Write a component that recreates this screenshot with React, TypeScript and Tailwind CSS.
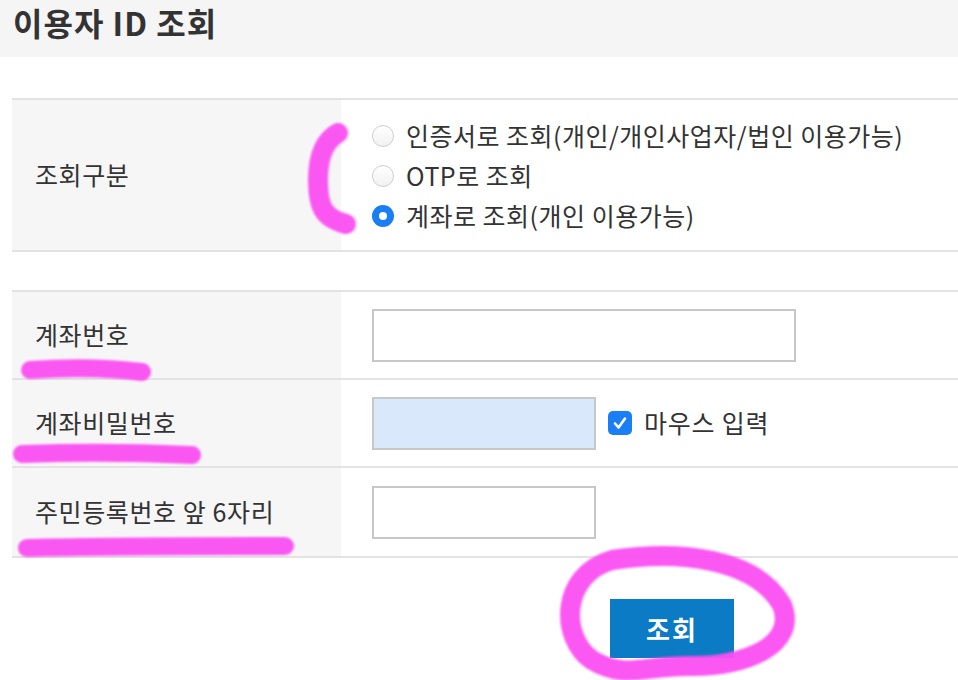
import React from "react";

const font = { fontFamily: '"Noto Sans CJK KR", "Noto Sans", sans-serif' };

function Radio({ checked }: { checked?: boolean }) {
  return checked ? (
    <span className="flex h-[22px] w-[22px] shrink-0 items-center justify-center rounded-full bg-[#1a7ef5]">
      <span className="h-[8px] w-[8px] rounded-full bg-white" />
    </span>
  ) : (
    <span className="h-[22px] w-[22px] shrink-0 rounded-full border border-[#cfcfcf] bg-gradient-to-b from-white to-[#f1f1f1]" />
  );
}

function Row({ label, children, last }: { label: string; children: React.ReactNode; last?: boolean }) {
  return (
    <div className={"flex h-[88px] " + (last ? "" : "border-b-2 border-[#e3e3e3]")}>
      <div className="flex w-[329px] items-center bg-[#f6f6f6] pl-[23px] text-[25px] tracking-[0.6px] text-[#333]">{label}</div>
      <div className="flex flex-1 items-center pl-[31px]">{children}</div>
    </div>
  );
}

export default function App() {
  return (
    <div className="relative h-[680px] w-[958px] overflow-hidden bg-white" style={font}>
      <div className="flex h-[57px] items-start bg-[#f5f5f5] pl-[13px] pt-[1px]">
        <h1 className="text-[32px] font-bold leading-[42px] tracking-[1px] text-[#333]">이용자 ID 조회</h1>
      </div>

      <div className="ml-[12px] mt-[41px] border-y-2 border-[#e3e3e3]">
        <div className="flex h-[150px]">
          <div className="flex w-[329px] items-center bg-[#f6f6f6] pl-[23px] text-[25px] tracking-[0.6px] text-[#333]">조회구분</div>
          <div className="flex flex-1 flex-col pl-[31px] pt-[16px] text-[25px] tracking-[0.5px] text-[#333]">
            <label className="flex h-[40px] items-center gap-[12px]">
              <Radio />
              <span>인증서로 조회(개인/개인사업자/법인 이용가능)</span>
            </label>
            <label className="flex h-[40px] items-center gap-[12px]">
              <Radio />
              <span>OTP로 조회</span>
            </label>
            <label className="flex h-[40px] items-center gap-[12px]">
              <Radio checked />
              <span>계좌로 조회(개인 이용가능)</span>
            </label>
          </div>
        </div>
      </div>

      <div className="ml-[12px] mt-[38px] border-y-2 border-[#e3e3e3]">
        <Row label="계좌번호">
          <div className="h-[53px] w-[424px] border-2 border-[#c8c8c8] bg-white" />
        </Row>
        <Row label="계좌비밀번호">
          <div className="h-[53px] w-[224px] border-2 border-[#c8c8c8] bg-[#d9e8fb]" />
          <span className="ml-[12px] flex h-[24px] w-[24px] items-center justify-center rounded-[5px] bg-[#1a7ef5]">
            <svg width="16" height="16" viewBox="0 0 16 16" fill="none">
              <path d="M3 8.5 L6.5 12.5 L13 3.5" stroke="white" strokeWidth="2.6" strokeLinecap="round" strokeLinejoin="round" />
            </svg>
          </span>
          <span className="ml-[12px] text-[25px] tracking-[0.8px] text-[#333]">마우스 입력</span>
        </Row>
        <Row label="주민등록번호 앞 6자리" last>
          <div className="h-[53px] w-[224px] border-2 border-[#c8c8c8] bg-white" />
        </Row>
      </div>

      <div className="pl-[610px] pt-[41px]">
        <button className="flex h-[59px] w-[124px] items-center justify-center bg-[#0a7bc4] text-[26px] font-bold tracking-[2px] text-white">
          조회
        </button>
      </div>

      <svg className="pointer-events-none absolute left-0 top-0" width="958" height="680" viewBox="0 0 958 680">
        <defs>
          <filter id="soft" x="-10%" y="-10%" width="120%" height="120%">
            <feGaussianBlur stdDeviation="1.2" />
          </filter>
        </defs>
        <g stroke="#fb4ff2" strokeLinecap="round" strokeLinejoin="round" fill="none" filter="url(#soft)" opacity="0.95">
          <path d="M338 133 C 322 142, 318 160, 318 180 C 318 205, 322 218, 346 224" strokeWidth="20" />
          <path d="M30 370 C 70 367, 110 368, 142 372" strokeWidth="18" />
          <path d="M22 454 C 80 452, 150 453, 192 455" strokeWidth="18" />
          <path d="M27 548 C 110 546, 200 546, 285 546" strokeWidth="18" />
          <path d="M612 560 C 680 550, 755 558, 782 605 C 798 645, 745 667, 690 666 C 645 665, 625 680, 592 660 C 560 638, 560 575, 612 560 Z" strokeWidth="20" />
        </g>
      </svg>
    </div>
  );
}
